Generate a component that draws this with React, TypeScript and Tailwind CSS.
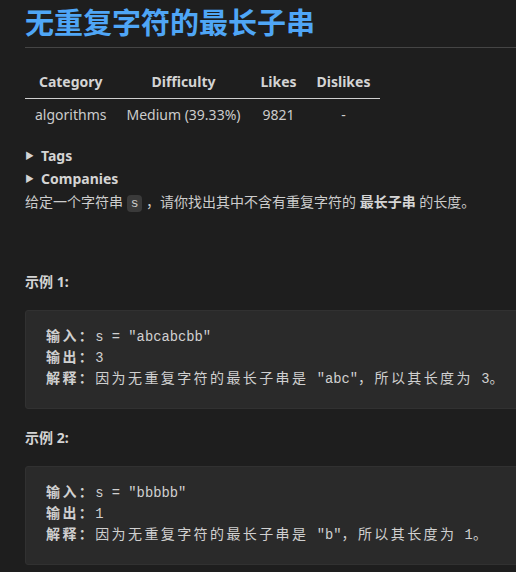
import React from 'react';

const body = '"Noto Sans", "Noto Sans CJK SC", sans-serif';
const mono = '"Liberation Mono", "Noto Sans CJK SC", monospace';

// CJK glyphs in the code font sit in double-width cells
function Mono({ text }: { text: string }) {
  const parts = text.split(/([\u3000-\u303f\u4e00-\u9fff\uff00-\uffef]+)/);
  return (
    <>
      {parts.map((p, i) =>
        i % 2 === 1 ? (
          <span key={i} className="text-[14px] tracking-[2.4px]">{p}</span>
        ) : (
          <span key={i}>{p}</span>
        )
      )}
    </>
  );
}

function Example({ input, output, explain }: { input: string; output: string; explain: string }) {
  return (
    <pre
      className="mt-[17px] rounded-[3px] border border-[#313131] bg-[#2a2a2a] pl-[20px] pt-4 pb-[18px] text-[13.8px] leading-[20px] text-[#d0d0d0]"
      style={{ fontFamily: mono }}
    >
      <div>
        <strong className="font-bold"><Mono text="输入：" /></strong>
        <Mono text={input} />
      </div>
      <div>
        <strong className="font-bold"><Mono text="输出：" /></strong>
        <Mono text={output} />
      </div>
      <div>
        <strong className="font-bold"><Mono text="解释：" /></strong>
        <Mono text={explain} />
      </div>
    </pre>
  );
}

export default function App() {
  const headers = ['Category', 'Difficulty', 'Likes', 'Dislikes'];
  const row = ['algorithms', 'Medium (39.33%)', '9821', '-'];

  return (
    <div className="h-[572px] w-[516px] overflow-hidden bg-[#1e1e1e] text-[#cccccc]" style={{ fontFamily: body }}>
      <div className="w-[530px] pl-[25px]">
        <h1 className="mt-[5px] border-b border-[#454545] pb-[7px] text-[29px] font-bold leading-[35px] text-[#4fa6f6]">
          无重复字符的最长子串
        </h1>

        <table className="mt-[18px] border-collapse text-[14px] leading-[22px]">
          <thead>
            <tr className="border-b border-[#d0d0d0]">
              {headers.map((h) => (
                <th key={h} className="px-[10px] py-[5px] text-center font-bold text-[#d4d4d4]">{h}</th>
              ))}
            </tr>
          </thead>
          <tbody>
            <tr>
              {row.map((c, i) => (
                <td key={i} className="px-[10px] py-[5px] text-center">{c}</td>
              ))}
            </tr>
          </tbody>
        </table>

        <div className="mt-[13px] text-[14px] leading-[23px]">
          <div className="flex items-center font-bold text-[#d4d4d4]">
            <span className="mr-[7px] text-[9px]">▶</span>Tags
          </div>
          <div className="flex items-center font-bold text-[#d4d4d4]">
            <span className="mr-[7px] text-[9px]">▶</span>Companies
          </div>
          <p>
            给定一个字符串{' '}
            <code className="rounded-[4px] bg-[#3a3a3a] px-[4px] py-[1px] text-[13px]" style={{ fontFamily: mono }}>s</code>
            {' '}，请你找出其中不含有重复字符的 <strong className="font-bold text-[#d4d4d4]">最长子串</strong> 的长度。
          </p>
        </div>

        <h3 className="mt-[55px] text-[14px] font-bold leading-[23px] text-[#d4d4d4]">示例 1:</h3>
        <Example input={'s = "abcabcbb"'} output="3" explain={'因为无重复字符的最长子串是 "abc"，所以其长度为 3。'} />

        <h3 className="mt-[17px] text-[14px] font-bold leading-[23px] text-[#d4d4d4]">示例 2:</h3>
        <Example input={'s = "bbbbb"'} output="1" explain={'因为无重复字符的最长子串是 "b"，所以其长度为 1。'} />
      </div>
    </div>
  );
}
